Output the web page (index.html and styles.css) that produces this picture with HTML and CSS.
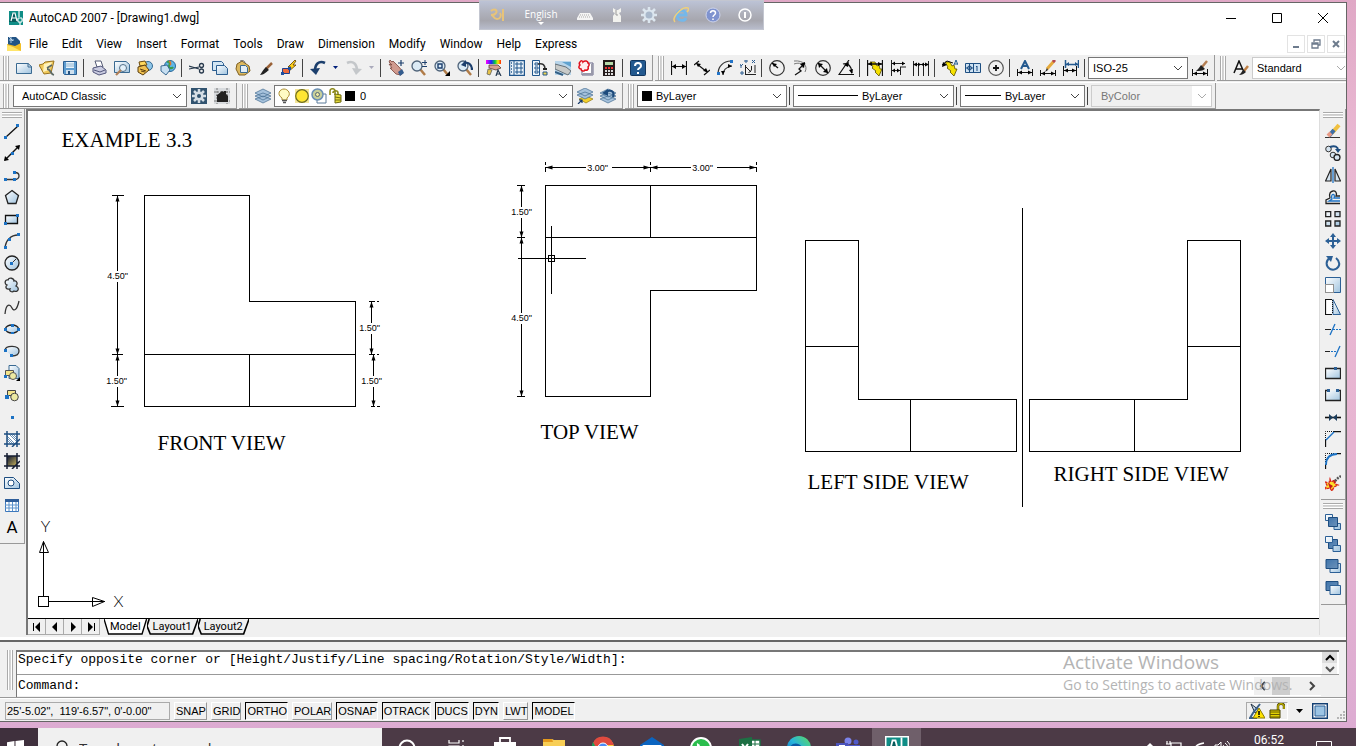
FILE: index.html
```html
<!DOCTYPE html>
<html lang="en">
<head>
<meta charset="utf-8">
<title>AutoCAD 2007 - [Drawing1.dwg]</title>
<link rel="stylesheet" href="styles.css">
</head>
<body>
<svg class="defs" aria-hidden="true">
  <defs>
    <linearGradient id="blue" x1="0" y1="0" x2="1" y2="1"><stop offset="0" stop-color="#fff"/><stop offset="1" stop-color="#9fc3df"/></linearGradient>
    <linearGradient id="deep" x1="0" y1="0" x2="1" y2="1"><stop offset="0" stop-color="#3f74ab"/><stop offset="1" stop-color="#6d93ba"/></linearGradient>
    <linearGradient id="dusk" x1="0" y1="0" x2="1" y2="1"><stop offset="0" stop-color="#0b1430"/><stop offset="1" stop-color="#c9b45c"/></linearGradient>
    <linearGradient id="rainbow"><stop offset="0" stop-color="#f0f"/><stop offset=".35" stop-color="#22f"/><stop offset=".6" stop-color="#0c4"/><stop offset=".8" stop-color="#fe0"/><stop offset="1" stop-color="#f20"/></linearGradient>
    <linearGradient id="edge" x1="0" y1="1" x2="1" y2="0"><stop offset="0" stop-color="#0b5cb0"/><stop offset=".5" stop-color="#27b4de"/><stop offset="1" stop-color="#5fdc5a"/></linearGradient>
  </defs>
  <symbol id="chev" viewBox="0 0 10 10"><path d="M1 3l4 4 4-4" fill="none" stroke="currentColor"/></symbol>
  <symbol id="lens" viewBox="0 0 16 16"><path d="M9 9l5 6" stroke="#b07c48" stroke-width="2.500"/><circle cx="6" cy="6" r="5" fill="#dcebf6" stroke="#50647a" stroke-width="1.300"/></symbol>
  <symbol id="bolt" viewBox="0 0 16 16"><path d="M3 2h5l2 4 2-1 1 4h2l-3 7-4-4 1-1-4-3 1-1z" fill="#f5e000" stroke="#554c00" stroke-width=".8"/></symbol>
  <symbol id="stack" viewBox="0 0 16 16"><path d="M0 11l8-3 8 3-8 4zM0 8l8-3 8 3-8 4zM0 5l8-4 8 4-8 4z" fill="#a6c2dc" stroke="#446b91" stroke-width=".7"/></symbol>
  <symbol id="cad" viewBox="0 0 16 16"><path d="M1 1h14v14H1z" fill="#0f8d86"/><path d="M1 12h9l-3-9H4z" fill="#075b5c"/><path d="M3 11l2-8h2l2 8M4 8h4M11 1v6m-2 3h6M12 9v6" fill="none" stroke="#fff" stroke-width="1.200"/><path d="M10 8h4v4h-4z" fill="#0f8d86" stroke="#fff"/></symbol>
</svg>

<div class="desktop">
<div class="window">
  <header class="titlebar">
    <svg class="i"><use href="#cad"/></svg>
    <h1>AutoCAD 2007 - [Drawing1.dwg]</h1>
    <div class="winbtns">
      <button aria-label="Minimize"><svg class="i" viewBox="0 0 16 16"><path d="M3 8.500h10" stroke="#000"/></svg></button>
      <button aria-label="Maximize"><svg class="i" viewBox="0 0 16 16"><path d="M3.500 3.500h9v9h-9z" fill="none" stroke="#000"/></svg></button>
      <button aria-label="Close"><svg class="i" viewBox="0 0 16 16"><path d="M3 3l10 10M13 3L3 13" stroke="#000"/></svg></button>
    </div>
  </header>

  <nav class="menubar">
    <svg class="i" viewBox="0 0 16 16"><path d="M2 1h8l4 4v10H2z" fill="#225485"/><path d="M1 8l8 2 6-3v8H1z" fill="#f2bf26"/><path d="M1 9l6 2 8 4H1z" fill="#ffe56b"/><path d="M3 4h5M5 1v6M3 1l4 4" stroke="#cfe6f5" stroke-width=".8"/></svg>
    <button>File</button><button>Edit</button><button>View</button><button>Insert</button><button>Format</button><button>Tools</button><button>Draw</button><button>Dimension</button><button>Modify</button><button>Window</button><button>Help</button><button>Express</button>
    <div class="mdibtns">
      <button aria-label="Minimize drawing"><svg viewBox="0 0 12 12"><path d="M3 9h6" stroke="#6d7b8d" stroke-width="2"/></svg></button>
      <button aria-label="Restore drawing"><svg viewBox="0 0 12 12"><path d="M4 4V2h6v5H8M2 5h6v5H2zM2 6h6" fill="none" stroke="#6d7b8d" stroke-width="1.300"/></svg></button>
      <button aria-label="Close drawing"><svg viewBox="0 0 12 12"><path d="M3 3l6 6M9 3L3 9" stroke="#6d7b8d" stroke-width="2"/></svg></button>
    </div>
  </nav>

  <div class="toolrow">
    <div class="toolbar">
      <i class="grip"></i>
      <button aria-label="New"><svg class="i" viewBox="0 0 16 16"><path d="M.5 3.500H12l3.500 3v7H.5z" fill="url(#blue)" stroke="#3a6a92"/><path d="M12 3v4h4" fill="none" stroke="#3a6a92"/></svg></button>
      <button aria-label="Open"><svg class="i" viewBox="0 0 16 16"><path d="M0 5l4-1 2-2 9-1-3 12-7 1z" fill="#f0c95a" stroke="#9a7420"/><path d="M5 4l8-2-3 8-6 2z" fill="#fff3bd"/><path d="M8 8l5-3M8 9c4 0 3 5 7 6" fill="none" stroke="#5d6a66" stroke-width="1.800"/></svg></button>
      <button aria-label="Save"><svg class="i" viewBox="0 0 16 16"><path d="M1.500 1.500h13v13h-12l-1-1z" fill="#5d9cd0" stroke="#2c5e90"/><path d="M4 2h8v6H4z" fill="#e8f3fb"/><path d="M4 4h8M4 6h8" stroke="#8fb4d0"/><path d="M4 10h8v4H4z" fill="#cfe0ee"/><path d="M6 11h2v3H6z" fill="#26517d"/></svg></button>
      <i class="sep"></i>
      <button aria-label="Plot"><svg class="i" viewBox="0 0 16 16"><path d="M4 1h6l2 6H6z" fill="#fff" stroke="#555b75"/><path d="M2 8l8-2 5 4v3l-7 2-6-3z" fill="#c9cbe0" stroke="#51557a"/><path d="M3 10l6 2 5-2" fill="none" stroke="#51557a"/></svg></button>
      <button aria-label="Plot preview"><svg class="i" viewBox="0 0 16 16"><path d="M.5 1.500H12l3.500 3v8H.5z" fill="url(#blue)" stroke="#3a6a92"/><circle cx="9" cy="8" r="3.500" fill="#e4f1fa" stroke="#52708a"/><path d="M7 10l-5 5" stroke="#b08058" stroke-width="2.200"/></svg></button>
      <button aria-label="Publish"><svg class="i" viewBox="0 0 16 16"><circle cx="11" cy="6" r="4.500" fill="#8fc6e8" stroke="#336a92"/><path d="M2 2l6-1 2 4-7 1z" fill="#ffd95c" stroke="#6b4a10"/><path d="M1 7l7-2 4 5-6 5-5-3z" fill="#f0c150" stroke="#5b3f10"/><path d="M3 9l6 2M4 11l4 1" stroke="#5b3f10"/></svg></button>
      <button aria-label="3D DWF"><svg class="i" viewBox="0 0 16 16"><circle cx="10" cy="6" r="5.500" fill="#5fb6e8" stroke="#2c6796"/><path d="M7 2c3-1 3 2 2 4s3 3 4 1" fill="none" stroke="#3a9b4b" stroke-width="2"/><path d="M9 1c2 1 2 3 1 4" fill="none" stroke="#e0752c" stroke-width="1.500"/><path d="M1 6l6-1 3 5-4 5-5-4z" fill="#c7dff2" stroke="#3a6a92"/></svg></button>
      <i class="sep"></i>
      <button aria-label="Cut"><svg class="i" viewBox="0 0 16 16"><path d="M0 6l10 3M0 9l10-2" stroke="#27394c" stroke-width="1.200"/><circle cx="12.500" cy="5.500" r="2" fill="none" stroke="#27394c" stroke-width="1.300"/><circle cx="12.500" cy="11" r="2" fill="none" stroke="#27394c" stroke-width="1.300"/></svg></button>
      <button aria-label="Copy"><svg class="i" viewBox="0 0 16 16"><path d="M.5 1.500h9l2 2v7H.5z" fill="#d4e6f3" stroke="#2c5e90"/><path d="M4.500 5.500h8l3 3v6h-11z" fill="url(#blue)" stroke="#2c5e90"/></svg></button>
      <button aria-label="Paste"><svg class="i" viewBox="0 0 16 16"><path d="M2 4l5-3 7 5 1 5-5 4H4L1 9z" fill="#dcb960" stroke="#806020"/><path d="M5 1c3-1 5 0 5 2" fill="none" stroke="#666"/><path d="M5.500 5.500h5l2 2v5h-7z" fill="#e2eef8" stroke="#3a6a92"/></svg></button>
      <button aria-label="Match properties"><svg class="i" viewBox="0 0 16 16"><path d="M14 3L8 9" stroke="#9a6238" stroke-width="2.500"/><path d="M8 7l3 3c-3 2-5 5-9 5 2-3 3-5 6-8z" fill="#222"/></svg></button>
      <button aria-label="Block editor"><svg class="i" viewBox="0 0 16 16"><path d="M14 0L7 7h3l-3 5 8-7h-3l3-4z" fill="#ffd21c" stroke="#5b3800" stroke-width=".8"/><path d="M1.500 8.500h7v5h-7z" fill="#ec6a3a" stroke="#1d3f8f"/><path d="M0 12h3v3H0zM7 7h3v3H7z" fill="#1d4f9f"/></svg></button>
      <i class="sep"></i>
      <button aria-label="Undo"><svg class="i" viewBox="0 0 16 16"><path d="M15 3C9 0 5 4 5 11" fill="none" stroke="#1c3f6d" stroke-width="2.600"/><path d="M0 9l10-1-4 7z" fill="#1c3f6d"/></svg></button>
      <button class="drop" aria-label="Undo list"><svg viewBox="0 0 6 6"><path d="M0 1h5L2.500 4z" fill="#001f7a"/></svg></button>
      <button aria-label="Redo"><svg class="i" viewBox="0 0 16 16"><path d="M1 3c6-3 10 1 10 8" fill="none" stroke="#c4c7ca" stroke-width="2.600"/><path d="M16 9L6 8l4 7z" fill="#c4c7ca"/></svg></button>
      <button class="drop" aria-label="Redo list"><svg viewBox="0 0 6 6"><path d="M0 1h5L2.500 4z" fill="#aab"/></svg></button>
      <i class="sep"></i>
      <button aria-label="Pan"><svg class="i" viewBox="0 0 16 16"><path d="M1 2l3 3-3-1 3 4-2 0 6 6 5 1 2-3-4-5-6-6-1 1-2-2z" fill="#d09a8e" stroke="#7a433a" stroke-width=".8"/><path d="M10 12l4-3 2 4-4 3z" fill="#335c8e"/><path d="M13 0v6M10 3h6" stroke="#1c3f6d" stroke-width="1.200"/></svg></button>
      <button aria-label="Zoom realtime"><svg class="i" viewBox="0 0 16 16"><use href="#lens"/><path d="M14 0v5M11 2.500h5M11 6.500h5" stroke="#1c3f6d"/></svg></button>
      <button aria-label="Zoom window"><svg class="i" viewBox="0 0 16 16"><use href="#lens"/><path d="M4 4h4v4H4z" fill="none" stroke="#1c3f6d" stroke-width="1.400"/><path d="M16 11v5h-5z"/></svg></button>
      <button aria-label="Zoom previous"><svg class="i" viewBox="0 0 16 16"><use href="#lens"/><path d="M15 10c0-6-4-8-8-7" fill="none" stroke="#1c3f6d" stroke-width="2.200"/><path d="M9 0v7L4 5z" fill="#1c3f6d"/></svg></button>
      <i class="sep"></i>
      <button aria-label="Properties"><svg class="i" viewBox="0 0 16 16"><path d="M0 0h15v4H0z" fill="url(#rainbow)"/><path d="M3 5l9 0 3 3-5 2-7-2z" fill="#d8a090" stroke="#553a35" stroke-width=".8"/><path d="M2 9l4 1-2 5-3-1z" fill="#e5c24a" stroke="#555" stroke-width=".7"/><path d="M10 16l2-6 3 6M11 14h3" fill="none" stroke="#24384f" stroke-width="1.200"/></svg></button>
      <button aria-label="DesignCenter"><svg class="i" viewBox="0 0 16 16"><path d="M.5.5h15v15H.5z" fill="#edf5fb" stroke="#20568c" stroke-width="1.500"/><path d="M5 1v14" stroke="#20568c"/><path d="M2 3h1M2 6h1M2 9h1M2 12h1" stroke="#20568c" stroke-width="1.500"/><path d="M7 3h2v2H7zM11 3h2v2h-2zM7 7h2v2H7zM11 7h2v2h-2zM7 11h2v2H7zM11 11h2v2h-2z" fill="none" stroke="#20568c"/></svg></button>
      <button aria-label="Tool palettes"><svg class="i" viewBox="0 0 16 16"><path d="M.5.5h7v15h-7z" fill="#edf5fb" stroke="#20568c"/><path d="M3 3h3v2H3zM3 7h3v2H3zM3 11h3v2H3z" fill="none" stroke="#20568c"/><path d="M6 4c5-1 7 1 7 5" fill="none" stroke="#333" stroke-width="1.600"/><path d="M11 8h4v2h-4z" fill="#222"/><path d="M11 12h4v3h-4z" fill="#f2d44e" stroke="#20568c"/></svg></button>
      <button aria-label="Sheet set manager"><svg class="i" viewBox="0 0 16 16"><path d="M0 1h16v14H0z" fill="#b8d5ea"/><path d="M7 2l9 0v5z" fill="#5fa2cf"/><path d="M0 4l11 3 5 4-3 4L0 9z" fill="#c8cac8" stroke="#657078"/><path d="M0 12l8 3" stroke="#335f85" stroke-width="2"/></svg></button>
      <button aria-label="Markup"><svg class="i" viewBox="0 0 16 16"><path d="M4 3h11v12H4z" fill="#fff" stroke="#668"/><path d="M5 14h9V4" fill="none" stroke="#99a" stroke-width="2"/><path d="M2 2c1-2 3-1 3 0 2-2 5-1 5 1 2 1 1 3 0 4 1 2-1 4-3 3-1 2-4 1-4-1-2 0-3-2-1-4-1-1-1-2 0-3z" fill="#fdeeee" stroke="#e0101c" stroke-width="1.500"/></svg></button>
      <button aria-label="Calculator"><svg class="i" viewBox="0 0 16 16"><path d="M2 0h12v16H2z" fill="#231a1a"/><path d="M4 2h8v3H4z" fill="#b5d9a8"/><path d="M4 8h8" stroke="#e33" stroke-width="2" stroke-dasharray="2 1"/><path d="M4 11h8M4 14h8" stroke="#ddd" stroke-width="2" stroke-dasharray="2 1"/></svg></button>
      <i class="sep"></i>
      <button aria-label="Help"><svg class="i" viewBox="0 0 16 16"><rect x=".5" y=".5" width="15" height="15" rx="1" fill="#23598f" stroke="#12365e"/><path d="M5 6c0-4 6-4 6 0 0 2-3 2-3 4M8 12v2" fill="none" stroke="#fff" stroke-width="2"/></svg></button>
    </div>

    <div class="toolbar">
      <i class="grip"></i>
      <button aria-label="Linear dimension"><svg class="i" viewBox="0 0 16 16"><path d="M.5 1v14M15.500 1v14M1 6.500h14" stroke="#111" stroke-width="1.200"/><path d="M1 6.500L5 4v5zM15 6.500L11 4v5z"/></svg></button>
      <button aria-label="Aligned dimension"><svg class="i" viewBox="0 0 16 16"><path d="M0 5l5-4M10 15l6-5M3 4l10 8" stroke="#111" stroke-width="1.200"/><path d="M2 3l5 1-3 3zM14 12l-5-1 3-3z"/></svg></button>
      <button aria-label="Arc length"><svg class="i" viewBox="0 0 16 16"><path d="M1 14C1 7 6 1 14 1M6 15c0-5 3-8 9-9" fill="none" stroke="#333" stroke-width="1.200"/><path d="M0 12h3v3H0zM13 0h3v3h-3z" fill="#2374c8"/><path d="M6 15l-2-4h4zM15 6l-4-2v4z"/></svg></button>
      <button aria-label="Ordinate"><svg class="i" viewBox="0 0 16 16"><path d="M5.500 5v10M5 14.500h11M11.500 6v4l-3 3M6 7l5 5M15 5v8" fill="none" stroke="#222"/><path d="M0 4l1 2 2-2M1 6v2M1 12h2v2H1zM5 0h2v2H5zM12 0l3 3M15 0l-3 3" fill="none" stroke="#2b5c91"/></svg></button>
      <i class="sep"></i>
      <button aria-label="Radius"><svg class="i" viewBox="0 0 16 16"><circle cx="8" cy="8" r="7.300" fill="none" stroke="#333" stroke-width="1.200"/><path d="M3 3l6 5" stroke="#111" stroke-width="1.300"/><path d="M3 3l5 1-3 3z"/></svg></button>
      <button aria-label="Jogged"><svg class="i" viewBox="0 0 16 16"><path d="M2 1c10-1 14 5 11 11M2 4c6-2 9 0 9 4" fill="none" stroke="#777"/><path d="M3 15l6-4-2-2 6-6" fill="none" stroke="#111" stroke-width="1.300"/><path d="M13 2l-1 6-4-4z"/></svg></button>
      <button aria-label="Diameter"><svg class="i" viewBox="0 0 16 16"><circle cx="8" cy="8" r="7.300" fill="none" stroke="#333" stroke-width="1.200"/><path d="M3 3l10 10" stroke="#111" stroke-width="1.300"/><path d="M3 3l5 1-4 4zM13 13l-5-1 4-4z"/></svg></button>
      <button aria-label="Angular"><svg class="i" viewBox="0 0 16 16"><path d="M11 0L1 14.500h15M5 4c5-2 9 3 9 9" fill="none" stroke="#111" stroke-width="1.200"/><path d="M6 5l5-3-1 5zM14 14l-3-4 4-1z"/></svg></button>
      <i class="sep"></i>
      <button aria-label="Quick dimension"><svg class="i" viewBox="0 0 16 16"><use href="#bolt"/><path d="M.5 0v16M15.500 0v16M1 4h14" stroke="#111" stroke-width="1.300"/><path d="M1 4l4-2v4zM15 4l-4-2v4z"/></svg></button>
      <button aria-label="Baseline"><svg class="i" viewBox="0 0 16 16"><path d="M1.500 0v16M2 3.500h13M2 10.500h8M10.500 7v8M10 7h6" stroke="#222"/><path d="M2 3.500l3-2v4zM15 3.500l-3-2v4zM2 10.500l3-2v4zM10 10.500l-3-2v4z"/></svg></button>
      <button aria-label="Continue"><svg class="i" viewBox="0 0 16 16"><path d="M.5 1v15M5.500 5v11M10.500 5v11M15.500 1v15M1 4.500h14" stroke="#222"/><path d="M0 4.500l4-2v4zM8 4.500l-3-2v4zM8 4.500l3-2v4zM16 4.500l-4-2v4z"/></svg></button>
      <i class="sep"></i>
      <button aria-label="Quick leader"><svg class="i" viewBox="0 0 16 16"><use href="#bolt"/><path d="M0 5l5-4 6 2" fill="none" stroke="#111"/><path d="M0 7l1-5 4 3z"/><path d="M12 5l2-5 2 5M13 4h2" fill="none" stroke="#23598f"/></svg></button>
      <button aria-label="Tolerance"><svg class="i" viewBox="0 0 16 16"><path d="M.5 3.500h15v9H.5zM8.500 3v10" fill="#cfe2f2" stroke="#1e4f82"/><circle cx="4.500" cy="8" r="2" fill="none" stroke="#1e4f82"/><path d="M4.500 4v8M1 8h7M11 7l1-1v5" fill="none" stroke="#1e4f82"/></svg></button>
      <button aria-label="Center mark"><svg class="i" viewBox="0 0 16 16"><circle cx="8" cy="8" r="7.300" fill="none" stroke="#555" stroke-width="1.200"/><path d="M8 5v6M5 8h6" stroke="#111" stroke-width="1.800"/></svg></button>
      <i class="sep"></i>
      <button aria-label="Dimension edit"><svg class="i" viewBox="0 0 16 16"><path d="M4 9l4-8 4 8M5 6h6" fill="none" stroke="#23598f" stroke-width="2"/><path d="M.5 9v7M15.500 9v7M1 12.500h14" stroke="#111"/><path d="M1 12.500l4-2v4zM15 12.500l-4-2v4z"/></svg></button>
      <button aria-label="Dimension text edit"><svg class="i" viewBox="0 0 16 16"><path d="M14 1L7 9" stroke="#e5a93b" stroke-width="3"/><path d="M13 0l2 2" stroke="#b34550" stroke-width="3"/><path d="M7 8l-2 4 3-2" fill="#222"/><path d="M.5 10v6M15.500 10v6M1 13.500h14" stroke="#111"/><path d="M1 13.500l4-2v4zM15 13.500l-4-2v4z"/></svg></button>
      <button aria-label="Dimension update"><svg class="i" viewBox="0 0 16 16"><path d="M2.500 0v8M15.500 0v8M3 4.500h12" stroke="#23598f" stroke-width="1.500"/><path d="M3 4l3-2v4zM15 4l-3-2v4z" fill="#23598f"/><path d="M.5 6v10M13.500 6v10M1 10.500h12" stroke="#111"/><path d="M1 10.500l4-2v4zM13 10.500l-4-2v4z"/></svg></button>
      <i class="sep"></i>
      <div class="combo dimstyle"><select aria-label="Dimension style"><option>ISO-25</option></select><svg class="chev"><use href="#chev"/></svg></div>
      <button aria-label="Dimension style manager"><svg class="i" viewBox="0 0 16 16"><path d="M15 1l-5 6" stroke="#b58055" stroke-width="2.500"/><path d="M9 5l4 4c-3 2-5 2-9 2 2-2 3-3 5-6z" fill="#222"/><path d="M.5 9v7M15.500 9v7M1 13.500h14" stroke="#111"/><path d="M1 13.500l4-2v4zM15 13.500l-4-2v4z"/></svg></button>
    </div>

    <div class="toolbar last">
      <i class="grip"></i>
      <button aria-label="Text style"><svg class="i" viewBox="0 0 16 16"><path d="M1 13L6 1l4 9M3 9h6" fill="none" stroke="#111" stroke-width="1.500"/><path d="M15 6l-4 5" stroke="#c08045" stroke-width="2.500"/><path d="M10 9l3 3c-2 2-4 3-7 3 2-2 3-3 4-6z" fill="#222"/></svg></button>
      <div class="combo faded"><select aria-label="Text style name"><option>Standard</option></select><svg class="chev"><use href="#chev"/></svg></div>
    </div>
  </div>

  <div class="toolrow second">
    <div class="toolbar">
      <i class="grip"></i>
      <div class="combo workspace"><select aria-label="Workspace"><option>AutoCAD Classic</option></select><svg class="chev"><use href="#chev"/></svg></div>
      <button aria-label="Workspace settings"><svg class="i" viewBox="0 0 16 16"><path d="M0 0h16v16H0z" fill="#31536f"/><path d="M8 1v14M1 8h14M3 3l10 10M13 3L3 13" stroke="#d5dee5" stroke-width="2.500"/><circle cx="8" cy="8" r="4.500" fill="#d5dee5"/><circle cx="8" cy="8" r="2" fill="#31536f"/></svg></button>
      <button aria-label="My workspace"><svg class="i" viewBox="0 0 16 16"><path d="M0 0h16v16H0z" fill="#d8dbde"/><path d="M3 0v16M0 4h16M13 0v16M0 13h16" stroke="#777" stroke-dasharray="2 1"/><path d="M2 8l6-5 2 1V3h2v3l2 2v6H3V8z" fill="#222"/></svg></button>
    </div>
    <div class="toolbar">
      <i class="grip"></i>
      <button aria-label="Layer properties"><svg class="i"><use href="#stack"/></svg></button>
      <div class="combo layer">
        <svg class="i" viewBox="0 0 16 16"><path d="M5 10c-6-4-2-9 2-9s8 5 3 9v2H5z" fill="#fffbc4" stroke="#ab8d33"/><path d="M5 12.500h5M6 14.500h3" stroke="#555" stroke-width="1.300"/></svg>
        <svg class="i" viewBox="0 0 16 16"><path d="M1 1h14v14H1z" fill="#f5e69a"/><circle cx="8" cy="8" r="6.300" fill="#ffe633" stroke="#6b6b20" stroke-width="1.200"/></svg>
        <svg class="i" viewBox="0 0 16 16"><path d="M6 6h9v9H6z" fill="#fff" stroke="#5b7b99"/><circle cx="6.500" cy="6.500" r="5.500" fill="#c6cf9a" stroke="#6a8fb5" stroke-width="1.500"/><circle cx="6.500" cy="6.500" r="2" fill="#eee9a0" stroke="#567"/></svg>
        <svg class="i" viewBox="0 0 16 16"><path d="M2 7V3c0-3 5-3 5 0v4M5 5c0-3 5-3 5 0v3" fill="none" stroke="#8e8a1c" stroke-width="1.600"/><path d="M7 6l6 1v7l-6 1z" fill="#e6dc3c" stroke="#6f6b10"/><path d="M7 9l6 1M7 12l6 0" stroke="#6f6b10"/></svg>
        <i class="swatch"></i>
        <select aria-label="Layer"><option>0</option></select><svg class="chev"><use href="#chev"/></svg>
      </div>
      <button aria-label="Make layer current"><svg class="i" viewBox="0 0 16 16"><path d="M2 11l7-3 7 3-7 4z" fill="#f3cf2c" stroke="#8e7510" stroke-width=".7"/><path d="M0 7l8-3 8 3-8 4zM0 4l8-4 8 4-8 4z" fill="#a6c2dc" stroke="#446b91" stroke-width=".7"/><path d="M1 16l4-4M2 12h3v3" fill="none" stroke="#15396a" stroke-width="1.200"/></svg></button>
      <button aria-label="Layer previous"><svg class="i" viewBox="0 0 16 16"><use href="#stack"/><path d="M13 9c2-6-3-8-7-5" fill="none" stroke="#1c4a7c" stroke-width="2.200"/><path d="M2 5l6-4v7z" fill="#1c4a7c"/></svg></button>
    </div>
    <div class="toolbar">
      <i class="grip"></i>
      <div class="combo color"><i class="swatch"></i><select aria-label="Color"><option>ByLayer</option></select><svg class="chev"><use href="#chev"/></svg></div>
      <i class="sep"></i>
      <div class="combo ltype"><i class="rule long"></i><select aria-label="Linetype"><option>ByLayer</option></select><svg class="chev"><use href="#chev"/></svg></div>
      <i class="sep"></i>
      <div class="combo lweight"><i class="rule"></i><select aria-label="Lineweight"><option>ByLayer</option></select><svg class="chev"><use href="#chev"/></svg></div>
      <i class="sep"></i>
      <div class="combo plotstyle faded"><select aria-label="Plot style" disabled><option>ByColor</option></select><svg class="chev"><use href="#chev"/></svg></div>
    </div>
  </div>

  <main class="work">
    <div class="side left">
      <div class="toolbar vert">
        <i class="grip"></i>
        <button aria-label="Line"><svg class="i" viewBox="0 0 16 16"><path d="M2 14L14 3" stroke="#111" stroke-width="1.300"/><path d="M0 13h3v3H0zM12 1h3v3h-3z" fill="#1c72c4"/></svg></button>
        <button aria-label="Construction line"><svg class="i" viewBox="0 0 16 16"><path d="M1 15L15 1" stroke="#111" stroke-width="1.500"/><path d="M0 16l1-5 4 4zM16 0l-1 5-4-4z"/><path d="M7 7h3v3H7z" fill="#1c72c4"/></svg></button>
        <button aria-label="Polyline"><svg class="i" viewBox="0 0 16 16"><path d="M1 12.500h9c7 0 6-7 1-7" fill="none" stroke="#333" stroke-width="1.300"/><path d="M0 11h3v3H0zM9 11h3v3H9zM9 4h3v3H9z" fill="#1c72c4"/></svg></button>
        <button aria-label="Polygon"><svg class="i" viewBox="0 0 16 16"><path d="M8 1.500l6.500 5-2.500 8H4l-2.500-8z" fill="url(#blue)" stroke="#222" stroke-width="1.300"/></svg></button>
        <button aria-label="Rectangle"><svg class="i" viewBox="0 0 16 16"><path d="M1.500 4.500h12v8h-12z" fill="url(#blue)" stroke="#111" stroke-width="1.300"/><path d="M0 11h3v3H0zM12 3h3v3h-3z" fill="#1c72c4"/></svg></button>
        <button aria-label="Arc"><svg class="i" viewBox="0 0 16 16"><path d="M1 14C2 7 7 2 14 2" fill="none" stroke="#333" stroke-width="1.300"/><path d="M0 13h3v3H0zM4 5h3v3H4zM13 0h3v3h-3z" fill="#1c72c4"/></svg></button>
        <button aria-label="Circle"><svg class="i" viewBox="0 0 16 16"><circle cx="8" cy="8" r="7" fill="url(#blue)" stroke="#222" stroke-width="1.300"/><path d="M8 8l4-4" stroke="#333"/><path d="M6 7h3v3H6z" fill="#1c72c4"/></svg></button>
        <button aria-label="Revision cloud"><svg class="i" viewBox="0 0 16 16"><path d="M3 8C0 7 1 2 4 3c1-3 6-2 6 1 3-1 4 3 2 5 4 2 2 7-2 5-2 2-5 0-4-2-4 1-5-2-3-4z" fill="url(#blue)" stroke="#333" stroke-width="1.300"/></svg></button>
        <button aria-label="Spline"><svg class="i" viewBox="0 0 16 16"><path d="M1 15C2 4 6 5 8 9s5 2 7-7" fill="none" stroke="#333" stroke-width="1.300"/></svg></button>
        <button aria-label="Ellipse"><svg class="i" viewBox="0 0 16 16"><ellipse cx="8" cy="8" rx="6.500" ry="4" fill="url(#blue)" stroke="#222" stroke-width="1.300"/><path d="M0 7h3v3H0zM7 3h3v3H7zM13 7h3v3h-3zM7 11h3v2H7z" fill="#1c72c4"/></svg></button>
        <button aria-label="Ellipse arc"><svg class="i" viewBox="0 0 16 16"><path d="M1 7c1-5 14-5 14 1 0 4-4 5-7 5" fill="url(#blue)" stroke="#333" stroke-width="1.300"/><path d="M0 6h3v3H0zM6 11h3v3H6z" fill="#1c72c4"/></svg></button>
        <button aria-label="Insert block"><svg class="i" viewBox="0 0 16 16"><path d="M5 .5h7l3 3v10H5z" fill="url(#blue)" stroke="#3a6a92"/><path d="M1.500 5.500h8v5h-8z" fill="#f4e58a" stroke="#555"/><circle cx="9" cy="11" r="3.500" fill="#ece9a2" stroke="#555"/><path d="M0 10h3v3H0z" fill="#1c72c4"/><path d="M16 12v4h-4z"/></svg></button>
        <button aria-label="Make block"><svg class="i" viewBox="0 0 16 16"><path d="M3.500 3.500h8v5h-8z" fill="#f4e58a" stroke="#444"/><circle cx="10.500" cy="10" r="3.800" fill="#ece9a2" stroke="#444"/><path d="M1 8h4v4H1z" fill="#1c72c4"/></svg></button>
        <button aria-label="Point"><svg class="i" viewBox="0 0 16 16"><path d="M7 7h3v3H7z" fill="#1c72c4"/></svg></button>
        <button aria-label="Hatch"><svg class="i" viewBox="0 0 16 16"><path d="M3 3h10v10H3z" fill="#fff"/><path d="M3 5l8 8M3 9l4 4M5 3l8 8M9 3l4 4M3 7l6 6M7 3l6 6" stroke="#6b91b5"/><path d="M3 0v16M13 0v16M0 3h16M0 13h16M8 16l8-8" stroke="#1d4d80" stroke-width="1.500"/></svg></button>
        <button aria-label="Gradient"><svg class="i" viewBox="0 0 16 16"><path d="M3 3h10v10H3z" fill="url(#dusk)"/><path d="M3 0v16M13 0v16M0 3h16M0 13h16M8 16l8-8" stroke="#151d30" stroke-width="1.500"/></svg></button>
        <button aria-label="Region"><svg class="i" viewBox="0 0 16 16"><path d="M.5 2.500h9l6 6v5H.5z" fill="url(#blue)" stroke="#1d4d80"/><circle cx="7" cy="8" r="3" fill="#fff" stroke="#1d4d80"/></svg></button>
        <button aria-label="Table"><svg class="i" viewBox="0 0 16 16"><path d="M1.500 2.500h13v12h-13z" fill="#fff" stroke="#3c78bd"/><path d="M1 2h14v3H1z" fill="#2e5e9a"/><path d="M5 5v9M8.500 5v9M12 5v9M1 8h14M1 11h14" stroke="#5c93cc"/></svg></button>
        <button class="mtext" aria-label="Multiline text">A</button>
      </div>
    </div>

    <section class="drawing">
      <div class="canvas">
        <svg class="model" width="1290" height="507" viewBox="27.500 110.500 1290 507" role="img" aria-label="Orthographic views">
          <g class="ln">
            <path d="M144 195H249V301H355V406H144zM144 354H355M249 354V406"/>
            <path d="M545 185H756V290H650V396H545zM545 237H756M650 185V237"/>
            <path d="M805 240H858V399H1016V451H805zM805 346H858M910 399V451"/>
            <path d="M1187 240H1240V451H1029V399H1187zM1187 346H1240M1134 399V451M1022 207V506"/>
            <path d="M117 195V270M117 281V354M117 354V375M117 386V406M111 195H123M111 354H122M110 406H123"/>
            <path d="M371 301V322M371 333V354M373 354V375M373 386V406M368 301H374M376 301H378M368 354H374M376 354H378M370 406H374M376 406H379"/>
            <path d="M545 167H585M611 167H690M716 167H756M545 161V164M545 166V171M650 161V164M650 166V171M756 161V164M756 166V171"/>
            <path d="M521 185V206M521 217V237M521 237V312M521 323V396M516 185H524M516 237H524M516 396H524"/>
            <path d="M517 258H585M551 225V293M548 255H554V261H548z"/>
            <path d="M38 596H48V606H38zM43 596V541M48 601H104"/>
          </g>
          <path class="arrow" d="M117 195l-2 6h4zM117 354l-2-6h4zM117 354l-2 6h4zM117 406l-2-6h4zM371 301l-2 6h4zM371 354l-2-6h4zM373 354l-2 6h4zM373 406l-2-6h4zM521 185l-2 6h4zM521 237l-2-6h4zM521 237l-2 6h4zM521 396l-2-6h4zM545 167l7-2v4zM650 167l-7-2v4zM650 167l7-2v4zM756 167l-7-2v4z"/>
          <path class="ucs" d="M43 541l-4 11h9zM43 541v11M104 601l-12-4v9zM104 601H92"/>
          <g class="label">
            <text x="61" y="146">EXAMPLE 3.3</text>
            <text x="157" y="449">FRONT VIEW</text>
            <text x="540" y="438">TOP VIEW</text>
            <text x="807" y="488">LEFT SIDE VIEW</text>
            <text x="1053" y="480">RIGHT SIDE VIEW</text>
          </g>
          <g class="dim">
            <text x="117" y="278">4.50"</text><text x="116" y="383">1.50"</text>
            <text x="369" y="330">1.50"</text><text x="371" y="383">1.50"</text>
            <text x="597" y="170">3.00"</text><text x="702" y="170">3.00"</text>
            <text x="521" y="214">1.50"</text><text x="521" y="320">4.50"</text>
          </g>
          <g class="axis"><text x="45" y="531">Y</text><text x="118" y="606">X</text></g>
        </svg>
      </div>
      <div class="tabs">
        <button class="nav" aria-label="First layout"><svg viewBox="0 0 10 10"><path d="M1 1h1v8H1zM8 0v10L3 5z"/></svg></button>
        <button class="nav" aria-label="Previous layout"><svg viewBox="0 0 10 10"><path d="M7 0v10L2 5z"/></svg></button>
        <button class="nav" aria-label="Next layout"><svg viewBox="0 0 10 10"><path d="M3 0v10l5-5z"/></svg></button>
        <button class="nav" aria-label="Last layout"><svg viewBox="0 0 10 10"><path d="M8 1h1v8H8zM2 0v10l5-5z"/></svg></button>
        <button class="tab active"><svg viewBox="0 0 47 16" preserveAspectRatio="none"><path d="M0 0l5 15h37l5-15" fill="#fff" stroke="#000" stroke-width="1.500"/></svg><span>Model</span></button>
        <button class="tab"><svg viewBox="0 0 47 16" preserveAspectRatio="none"><path d="M2 0l-2 7 3 8h39l5-15" fill="#f0f0f0" stroke="#000" stroke-width="1.500"/></svg><span>Layout1</span></button>
        <button class="tab"><svg viewBox="0 0 47 16" preserveAspectRatio="none"><path d="M2 0l-2 7 3 8h39l5-15" fill="#f0f0f0" stroke="#000" stroke-width="1.500"/></svg><span>Layout2</span></button>
      </div>
    </section>

    <div class="side right">
      <div class="toolbar vert">
        <i class="grip"></i>
        <button aria-label="Erase"><svg class="i" viewBox="0 0 16 16"><path d="M0 14.500h15" stroke="#333"/><path d="M14 2L7 10" stroke="#f0c040" stroke-width="4"/><path d="M9 7l-5 6" stroke="#3c6ea8" stroke-width="4"/><path d="M6 10l-3 3" stroke="#e79a86" stroke-width="4"/></svg></button>
        <button aria-label="Copy object"><svg class="i" viewBox="0 0 16 16"><circle cx="3.500" cy="4" r="2.800" fill="#d5e3ef" stroke="#333"/><circle cx="8" cy="10" r="2.800" fill="#d5e3ef" stroke="#333"/><circle cx="12" cy="12.500" r="3" fill="#d5e3ef" stroke="#222" stroke-width="1.300"/><path d="M5 2c5-2 8 0 8 3" fill="none" stroke="#1d4d80" stroke-width="2"/><path d="M10 4h6l-3 4z" fill="#1d4d80"/></svg></button>
        <button aria-label="Mirror"><svg class="i" viewBox="0 0 16 16"><path d="M6 2v12H.5zM10 2v12h5.500z" fill="#d5e3ef" stroke="#222" stroke-width="1.200"/><path d="M8 0v16" stroke="#1c72c4" stroke-width="1.300"/></svg></button>
        <button aria-label="Offset"><svg class="i" viewBox="0 0 16 16"><path d="M15 14.500H1V11l4-2c-3-9 9-9 6-2h4" fill="none" stroke="#222" stroke-width="1.300"/><path d="M15 12H4l3-2c-2-6 4-6 2-1h6" fill="none" stroke="#1c72c4" stroke-width="1.300"/></svg></button>
        <button aria-label="Array"><svg class="i" viewBox="0 0 16 16"><path d="M.7.7h5v5h-5zM10 .7h5v5h-5zM.7 10h5v5h-5zM10 10h5v5h-5z" fill="url(#blue)" stroke="#222" stroke-width="1.300"/></svg></button>
        <button aria-label="Move"><svg class="i" viewBox="0 0 16 16"><path d="M8 2v12M2 8h12" stroke="#2c6096" stroke-width="2"/><path d="M8 0l3 4H5zM8 16l3-4H5zM0 8l4-3v6zM16 8l-4-3v6z" fill="#2c6096"/></svg></button>
        <button aria-label="Rotate"><svg class="i" viewBox="0 0 16 16"><path d="M5 3C1 5 0 11 5 14c7 3 13-5 6-11" fill="none" stroke="#2c6096" stroke-width="2"/><path d="M1 1l7 0-2 6z" fill="#2c6096"/></svg></button>
        <button aria-label="Scale"><svg class="i" viewBox="0 0 16 16"><path d="M.5.5h15v15H.5z" fill="url(#blue)" stroke="#2c6096"/><path d="M0 7h9v9H0z" fill="#fff"/><path d="M.5 7.500h8v8h-8z" fill="none" stroke="#222" stroke-dasharray="1 1"/></svg></button>
        <button aria-label="Stretch"><svg class="i" viewBox="0 0 16 16"><path d="M8 .5l7.500 15H8z" fill="url(#blue)" stroke="#2c6096"/><path d="M7 .500H.5v15H7" fill="#fff" stroke="#111" stroke-width="1.200"/><path d="M7.500 1v14" stroke="#111" stroke-dasharray="1 1"/></svg></button>
        <button aria-label="Trim"><svg class="i" viewBox="0 0 16 16"><path d="M0 8.500h6" stroke="#222"/><path d="M8 8.500h8" stroke="#1c72c4" stroke-dasharray="2 1"/><path d="M5 14l5-11" stroke="#1c72c4" stroke-width="1.300"/></svg></button>
        <button aria-label="Extend"><svg class="i" viewBox="0 0 16 16"><path d="M0 8.500h5" stroke="#222"/><path d="M6 8.500h6" stroke="#1c72c4" stroke-dasharray="2 1"/><path d="M10 14l5-11" stroke="#1c72c4" stroke-width="1.300"/></svg></button>
        <button aria-label="Break at point"><svg class="i" viewBox="0 0 16 16"><path d="M.5 3.500h15v10H.5z" fill="url(#blue)" stroke="#222" stroke-width="1.300"/><path d="M9 2h3v3H9z" fill="#2c6096"/></svg></button>
        <button aria-label="Break"><svg class="i" viewBox="0 0 16 16"><path d="M2 3.500H.5v10h15v-10H14" fill="url(#blue)" stroke="#222" stroke-width="1.300"/><path d="M2 2h3v3H2zM11 2h3v3h-3z" fill="#2c6096"/></svg></button>
        <button aria-label="Join"><svg class="i" viewBox="0 0 16 16"><path d="M0 8.500h16" stroke="#111" stroke-width="1.600"/><path d="M4 5l4 3.500L4 12zM12 5L8 8.500l4 3.500z" fill="#1b3d5c"/></svg></button>
        <button aria-label="Chamfer"><svg class="i" viewBox="0 0 16 16"><path d="M.5 16V9M9 .5h7" stroke="#111" stroke-width="1.300"/><path d="M.5 9V.5H9" fill="none" stroke="#111" stroke-dasharray="1 1"/><path d="M1 9l8-8" stroke="#1c72c4" stroke-width="1.500"/></svg></button>
        <button aria-label="Fillet"><svg class="i" viewBox="0 0 16 16"><path d="M.5 16v-5M11 .5h5" stroke="#111" stroke-width="1.300"/><path d="M.5 9V.5H9" fill="none" stroke="#111" stroke-dasharray="1 1"/><path d="M1 12C1 5 5 1 12 1" fill="none" stroke="#1c72c4" stroke-width="1.800"/></svg></button>
        <button aria-label="Explode"><svg class="i" viewBox="0 0 16 16"><path d="M5 4l1 3 4-2 0 4 3 1-4 2-2 4-2-3-5 1 2-4-2-3 4 1z" fill="#ffdf29" stroke="#d9251c" stroke-width="1.300" stroke-dasharray="3 1"/><path d="M3 8l5 3-3 3zM8 5l3 2-2 2z" fill="#c4161c"/><path d="M10 6l3-3 3-2" fill="none" stroke="#555" stroke-width="2.500" stroke-dasharray="2 1"/></svg></button>
      </div>
      <div class="toolbar vert">
        <i class="grip"></i>
        <button aria-label="Bring to front"><svg class="i" viewBox="0 0 16 16"><path d="M.5.5h7v6h-7zM9 9.500h6.500v6H9z" fill="url(#blue)" stroke="#2c6096"/><path d="M3.500 3.500h9v9h-9z" fill="url(#deep)" stroke="#1d4d80"/></svg></button>
        <button aria-label="Send to back"><svg class="i" viewBox="0 0 16 16"><path d="M3.500 3.500h9v9h-9z" fill="url(#deep)" stroke="#1d4d80"/><path d="M.5.5h7v6h-7zM8 9.500h7.500v6H8z" fill="url(#blue)" stroke="#2c6096"/></svg></button>
        <button aria-label="Bring above objects"><svg class="i" viewBox="0 0 16 16"><path d="M5 5.500h10.500v9H5z" fill="url(#blue)" stroke="#2c6096"/><path d="M1 1.500h12v9H1z" fill="url(#deep)" stroke="#1d4d80"/></svg></button>
        <button aria-label="Send under objects"><svg class="i" viewBox="0 0 16 16"><path d="M1 1.500h12v9H1z" fill="url(#deep)" stroke="#1d4d80"/><path d="M5 5.500h10.500v9H5z" fill="url(#blue)" stroke="#2c6096"/></svg></button>
      </div>
    </div>
  </main>

  <section class="command">
    <i class="grip"></i>
    <div class="console">
      <div class="history">
        <output>Specify opposite corner or [Height/Justify/Line spacing/Rotation/Style/Width]:</output>
        <div class="vscroll">
          <button aria-label="Scroll up"><svg viewBox="0 0 10 8"><path d="M1 6l4-4 4 4" fill="none" stroke="#000" stroke-width="2"/></svg></button>
          <button aria-label="Scroll down"><svg viewBox="0 0 10 8"><path d="M1 2l4 4 4-4" fill="none" stroke="#555" stroke-width="2"/></svg></button>
        </div>
      </div>
      <div class="entry">
        <label for="cmd">Command:</label><input id="cmd" type="text">
        <div class="hscroll">
          <button aria-label="Scroll left"><svg viewBox="0 0 8 10"><path d="M6 1L2 5l4 4" fill="none" stroke="#444" stroke-width="2"/></svg></button><i class="thumb"></i><button aria-label="Scroll right"><svg viewBox="0 0 8 10"><path d="M2 1l4 4-4 4" fill="none" stroke="#444" stroke-width="2"/></svg></button>
        </div>
      </div>
    </div>
  </section>

  <footer class="status">
    <span class="coords">25'-5.02",&nbsp; 119'-6.57", 0'-0.00"</span>
    <button>SNAP</button><button>GRID</button><button class="on">ORTHO</button><button>POLAR</button><button class="on">OSNAP</button><button class="on">OTRACK</button><button class="on">DUCS</button><button class="on">DYN</button><button>LWT</button><button class="on">MODEL</button>
    <div class="tray">
      <div class="traybox">
        <svg class="i" viewBox="0 0 16 16"><path d="M2 1l8 6-4 3z" fill="#c5d6e6" stroke="#234"/><path d="M11 1l-7 9-3 5h7" fill="none" stroke="#3a5f88" stroke-width="2"/><path d="M10 5l6 10H4z" fill="#ffe400" stroke="#8c7a00"/><path d="M10 8v4M10 13v1" stroke="#000" stroke-width="1.500"/></svg>
        <svg class="i" viewBox="0 0 16 16"><path d="M9 8V3c0-3 6-3 6 0v3" fill="none" stroke="#554d00" stroke-width="2.500"/><path d="M9 8V3c0-3 6-3 6 0v3" fill="none" stroke="#e8d800"/><path d="M1 7h10v8H1z" fill="#e3d200" stroke="#443e00"/><path d="M1 9h10M1 11.500h10M1 14h10" stroke="#665d00"/></svg>
      </div>
      <button class="menu" aria-label="Status bar menu"><svg viewBox="0 0 8 8"><path d="M0 2h7L3.500 6z"/></svg></button>
      <button aria-label="Clean screen"><svg class="i" viewBox="0 0 16 16"><path d="M.7.7h14.600v14.600H.7z" fill="#fff" stroke="#123f73" stroke-width="1.400"/><path d="M3 3h10v10H3z" fill="#9cc4e4" stroke="#2c6096"/></svg></button>
      <svg class="size" viewBox="0 0 10 10"><path d="M7 1h2v2H7zM4 4h2v2H4zM7 4h2v2H7zM1 7h2v2H1zM4 7h2v2H4zM7 7h2v2H7z" fill="#b5b5b5"/></svg>
    </div>
  </footer>
</div>

<div class="taskbar">
  <div class="taskinner">
    <button class="start" aria-label="Start"><svg viewBox="0 0 16 16"><path d="M0 2l7-1v6.500H0zM8 1l8-1v7.500H8zM0 8.500h7V15l-7-1zM8 8.500h8V16l-8-1z" fill="#fff"/></svg></button>
    <label class="search"><svg viewBox="0 0 16 16"><circle cx="9" cy="6" r="5" fill="none" stroke="#222" stroke-width="1.300"/><path d="M5 10l-4 5" stroke="#222"/></svg><input type="text" placeholder="Type here to search"></label>
    <div class="apps">
      <button aria-label="Cortana"><svg viewBox="0 0 24 24"><circle cx="12" cy="12" r="7.500" fill="none" stroke="#fff" stroke-width="2"/></svg></button>
      <button aria-label="Task view"><svg viewBox="0 0 24 24"><path d="M5 4v3h10V4M5 20v-3h10v3M5 10h10v4H5zM19 4v2M19 9v11" fill="none" stroke="#fff" stroke-width="1.200"/></svg></button>
      <button aria-label="Store"><svg viewBox="0 0 24 24"><path d="M1 6h22v16H1z" fill="#fff"/><path d="M7 6V2h10v4" fill="none" stroke="#fff" stroke-width="1.800"/></svg></button>
      <button aria-label="File Explorer"><svg viewBox="0 0 24 24"><path d="M1 3h9l2 1h11v18H1z" fill="#f8ce55"/><path d="M1 3h9l1 3H1z" fill="#e59a1c"/></svg></button>
      <button aria-label="Chrome"><svg viewBox="0 0 24 24"><circle cx="12" cy="12" r="11" fill="#ffcd40"/><path d="M2 7a11 11 0 0 1 20 0l1 2H12l-4 7z" fill="#e04a3f"/><path d="M2 6l6 11 2 6C1 21-1 12 2 6z" fill="#159f5c"/><circle cx="12" cy="12" r="5" fill="#4c8bf5" stroke="#fff"/></svg></button>
      <button aria-label="Mail"><svg viewBox="0 0 24 24"><path d="M0 9l12-8 12 8v13H0z" fill="#0b64c0"/><path d="M2 9h20l-10 7z" fill="#fff"/></svg></button>
      <button aria-label="WhatsApp"><svg viewBox="0 0 24 24"><circle cx="12" cy="12" r="10" fill="#2bbd4d" stroke="#fff" stroke-width="2"/><path d="M8 7c-1 5 4 10 9 9l-3-3-2 1-2-3 1-2z" fill="#fff"/></svg></button>
      <button aria-label="Excel"><svg viewBox="0 0 24 24"><path d="M12 4h10v16H12z" fill="#fff" stroke="#1d7044" stroke-width="1.500"/><path d="M13 8h8M13 12h8M17 4v16" stroke="#1d7044"/><path d="M1 3l13-2v22L1 20z" fill="#1d7044"/><path d="M4 8l6 8M10 8l-6 8" stroke="#fff" stroke-width="2"/></svg></button>
      <button aria-label="Edge"><svg viewBox="0 0 24 24"><circle cx="12" cy="12" r="12" fill="url(#edge)"/><path d="M2 13c2-7 10-7 13-2-5-2-9 3-5 10-5-1-9-4-8-8z" fill="#0c59a4"/></svg></button>
      <button aria-label="Teams"><svg viewBox="0 0 24 24"><circle cx="12" cy="5" r="3.500" fill="#7b83eb"/><circle cx="20" cy="6" r="2.500" fill="#5059c9"/><path d="M7 9h17v11H7z" fill="#5059c9"/><path d="M0 7h12v12H0z" fill="#4b53bc"/><path d="M3 10h6M6 10v6" stroke="#fff" stroke-width="2"/></svg></button>
      <button class="running" aria-label="AutoCAD"><svg viewBox="0 0 16 16"><path d="M0 0h16v16H0z" fill="#fff"/><use href="#cad"/></svg></button>
    </div>
    <div class="systray">
      <svg viewBox="0 0 16 16"><path d="M3 9l5-5 5 5" fill="none" stroke="#fff" stroke-width="1.500"/></svg>
      <svg viewBox="0 0 16 16"><path d="M5 3h10v8H5zM0 4h5M1 1v3M4 1v3" fill="none" stroke="#fff" stroke-width="1.200"/></svg>
      <svg viewBox="0 0 16 16"><path d="M3 14C3 7 7 4 14 3M7 14c0-4 3-6 7-7" fill="none" stroke="#fff" stroke-width="1.300"/></svg>
      <svg viewBox="0 0 16 16"><path d="M1 5h3l3-3v12l-3-3H1zM9 5c2 2 2 4 0 6M11 3c4 3 4 7 0 10M13 1c5 5 5 9 0 14" fill="none" stroke="#fff"/></svg>
      <time>06:52</time>
      <svg viewBox="0 0 16 16"><path d="M.5 1.500h15v11H9l-3 3v-3H.5z" fill="none" stroke="#fff"/></svg>
    </div>
  </div>
</div>

<div class="langbar">
  <svg class="i" viewBox="0 0 16 16"><path d="M2 4c3-3 7-1 5 2-1 2-4 2-5 2 3 0 2 4 6 4 3 0 5-3 3-6M14 2v12" fill="none" stroke="#e7c37a" stroke-width="2"/></svg>
  <button class="lang">English<svg viewBox="0 0 6 4"><path d="M0 0h6L3 3z" fill="#fff"/></svg></button>
  <svg class="i" viewBox="0 0 16 16"><path d="M3 6h10l3 5v2H0v-2z" fill="#f4f4f4"/><path d="M3 8h10M2 10h12" stroke="#aaa" stroke-dasharray="1 1"/></svg>
  <svg class="i" viewBox="0 0 16 16"><path d="M4 1l3 2h2l3-2v4l-2 1 2 3v6H4V9l2-3-2-1z" fill="#f2f2ee"/><path d="M7 3v5h2" fill="none" stroke="#999"/></svg>
  <svg class="i" viewBox="0 0 16 16"><path d="M8 0v16M0 8h16M2 2l12 12M14 2L2 14" stroke="#dce6ef" stroke-width="2.500"/><circle cx="8" cy="8" r="4.500" fill="#a9b8cb" stroke="#dce6ef" stroke-width="2"/></svg>
  <svg class="i" viewBox="0 0 16 16"><path d="M13 11c-2 4-9 3-9-3s9-6 9 0H5" fill="none" stroke="#74b8ea" stroke-width="2.800"/><path d="M2 15C-2 11 9-1 15 1c1 1 0 3-1 4" fill="none" stroke="#edcf7c" stroke-width="1.500"/></svg>
  <svg class="i" viewBox="0 0 16 16"><circle cx="8" cy="8" r="7" fill="#7f93cf" stroke="#cdd3ea"/><path d="M5.500 6c0-3 5-3 5 0 0 2-2.500 2-2.500 4M8 11.500v1.500" fill="none" stroke="#fff" stroke-width="1.500"/></svg>
  <svg class="i" viewBox="0 0 16 16"><circle cx="8" cy="8" r="6" fill="none" stroke="#fff" stroke-width="1.500"/><path d="M8 5v6" stroke="#fff" stroke-width="2"/></svg>
</div>

<div class="watermark"><p>Activate Windows</p><p class="sub">Go to Settings to activate Windows.</p></div>
</div>
</body>
</html>
```
FILE: styles.css
```css
* { box-sizing: border-box; }

body {
  margin: 0;
  font: 12px/16px Roboto, "Open Sans", sans-serif;
  color: #000;
}

button {
  border: 0;
  padding: 0;
  background: none;
  font: inherit;
  color: inherit;
  display: flex;
  align-items: center;
  justify-content: center;
}

svg { flex: none; display: block; }
.i { width: 16px; height: 16px; }
.defs { position: absolute; width: 0; height: 0; }

.desktop {
  position: relative;
  height: 100vh;
  display: flex;
  flex-direction: column;
  padding-top: 2px;
  background: linear-gradient(#e0a8c6, #eab9d3 20%, #e7b5d2 60%, #dcabd2);
  overflow: hidden;
}

.window {
  flex: 1;
  min-height: 0;
  margin: 0 9px 6px 0;
  display: flex;
  flex-direction: column;
  background: #f0f0f0;
  border: 1px solid #666;
  border-left: 0;
  overflow: hidden;
}

/* Title and menu */
.titlebar {
  flex: none;
  height: 30px;
  display: flex;
  align-items: center;
  background: #fff;
  padding-left: 8px;
  gap: 5px;
}
.titlebar h1 { margin: 0; font-size: 12px; font-weight: 400; }
.winbtns { margin-left: auto; display: flex; }
.winbtns button { width: 46px; height: 29px; }

.menubar {
  flex: none;
  height: 21px;
  display: flex;
  align-items: center;
  background: #fff;
  padding: 0 1px 0 6px;
}
.menubar > button { padding: 0 7px; }
.mdibtns { margin-left: auto; display: flex; gap: 2px; }
.mdibtns button { width: 18px; height: 18px; border: 1px solid #e3e3e3; }
.mdibtns svg { width: 12px; height: 12px; }

/* Horizontal toolbars */
.toolrow { flex: none; height: 28px; display: flex; gap: 2px; border-top: 1px solid #fff; }
.toolrow.second { height: 27px; }
.toolbar {
  flex: none;
  display: flex;
  align-items: center;
  height: 26px;
  padding: 0 3px;
  border-right: 1px solid #999;
  border-bottom: 1px solid #999;
}
.toolbar > button { width: 23px; height: 23px; }
.toolbar > .drop { width: 13px; }
.drop svg { width: 6px; height: 6px; }
.toolbar.last { flex: 1; min-width: 0; padding-right: 0; border-right: 0; }
.grip {
  flex: none;
  width: 6px;
  height: 24px;
  margin-right: 3px;
  border: solid #aaa;
  border-width: 0 1px;
  background: linear-gradient(90deg, #fff 1px, #f0f0f0 1px, #aaa 2px, #fff 3px);
}
.sep { flex: none; width: 1px; height: 18px; margin: 0 3px 0 2px; background: #444; }

.combo {
  flex: none;
  display: flex;
  align-items: center;
  height: 22px;
  padding: 0 4px;
  gap: 4px;
  background: #fff;
  border: 1px solid #777;
}
.combo select {
  flex: 1;
  min-width: 0;
  appearance: none;
  border: 0;
  padding: 0;
  background: none;
  font: 11px/16px "Liberation Sans", sans-serif;
  color: #000;
  opacity: 1;
}
.chev { width: 10px; height: 10px; color: #444; }
.swatch { width: 10px; height: 10px; background: #000; }
.rule { width: 36px; height: 1px; background: #000; }
.rule.long { width: 60px; }
.dimstyle { width: 100px; }
.workspace { width: 174px; padding-left: 8px; margin-left: 1px; }
.layer { width: 299px; gap: 1px; padding-left: 2px; }
.layer select { padding-left: 4px; }
.color { width: 150px; }
.ltype { width: 161px; }
.lweight { width: 125px; }
.plotstyle { width: 121px; }
.combo.faded { border-color: #ccc; }
.faded .chev { color: #aaa; }
.last .combo { flex: 1; min-width: 0; border-right: 0; padding-right: 0; }
.plotstyle.combo { background: linear-gradient(90deg, #f0f0f0 100px, #fff 100px); padding-left: 9px; }
.plotstyle select { color: #777; }

/* Drawing area */
.work { flex: 1; min-height: 0; display: flex; }
.side { flex: none; width: 26px; }
.side.right { width: 26px; padding-left: 1px; }
.toolbar.vert {
  flex-direction: column;
  width: 25px;
  height: auto;
  padding: 3px 0 5px;
}
.vert > button { height: 22px; }
.vert .grip {
  width: 20px;
  height: 6px;
  margin: 0 0 2px;
  border-width: 1px 0;
  background: linear-gradient(#fff 1px, #f0f0f0 1px, #aaa 2px, #fff 3px);
}
.toolbar > .mtext { font: 17px/20px Roboto, sans-serif; }
.drawing {
  flex: 1;
  min-width: 0;
  display: flex;
  flex-direction: column;
  border: solid #777;
  border-width: 2px 0 0 2px;
  border-right: 1px solid #ddd;
}
.canvas { flex: 1; min-height: 0; background: #fff; overflow: hidden; border-bottom: 1px solid #000; }
.ln { fill: none; stroke: #000; shape-rendering: crispEdges; }
.arrow { fill: #000; }
.ucs { fill: #fff; stroke: #000; }
.label { font: 21px "Liberation Serif", serif; }
.dim { font: 9px "Liberation Sans", sans-serif; text-anchor: middle; }
.axis { font: 300 16px Lato, sans-serif; text-anchor: middle; }

.tabs { flex: none; height: 16px; display: flex; font-size: 11px; }
.nav { width: 18px; border-right: 1px solid #aaa; border-bottom: 1px solid #aaa; }
.nav svg { width: 10px; height: 10px; }
.tab { position: relative; padding: 0 6px; height: 16px; }
.tab.active { margin-left: 4px; }
.tab svg { position: absolute; inset: 0; width: 100%; height: 100%; }
.tab span { position: relative; }

/* Command line */
.command {
  flex: none;
  height: 58px;
  display: flex;
  margin-top: 5px;
  padding: 8px 7px 0;
  border-top: 2px solid #666;
  border-bottom: 1px solid #999;
  font: 13px/16px "Liberation Mono", monospace;
  box-shadow: 0 -3px #fff;
}
.command .grip { height: 40px; }
.console { flex: 1; min-width: 0; border: solid #777; border-width: 2px 0 0 1px; }
.history { display: flex; height: 23px; background: #fff; border-bottom: 1px solid #999; padding-left: 1px; }
.history output { flex: 1; }
.vscroll { width: 15px; height: 22px; margin-right: 2px; background: #f0f0f0; display: flex; flex-direction: column; }
.vscroll button { flex: 1; }
.vscroll button:first-child { background: #ddd; }
.vscroll svg { width: 10px; height: 8px; }
.entry { display: flex; height: 21px; background: #fff; padding-left: 1px; align-items: center; margin-right: 18px; }
.entry input { flex: 1; min-width: 0; border: 0; background: none; font: inherit; outline: 0; }
.hscroll { display: flex; width: 67px; height: 18px; background: #f0f0f0; }
.hscroll button { width: 18px; }
.hscroll svg { width: 8px; height: 10px; }
.thumb { width: 18px; background: #cdcdcd; margin-right: auto; }

/* Status bar */
.status {
  flex: none;
  height: 23px;
  display: flex;
  align-items: center;
  gap: 4px;
  padding: 1px 0 0 5px;
  font: 11px/16px "Liberation Sans", sans-serif;
  border-top: 1px solid #fff;
}
.coords { width: 165px; height: 18px; padding-left: 1px; border: 1px solid #aaa; }
.status > button { height: 18px; border: 1px solid #fff; border-right-color: #999; border-bottom-color: #999; padding-left: 1px; }
.status > .on { border-color: #000 #fff #fff #000; }
.tray { margin-left: auto; display: flex; align-items: center; gap: 8px; }
.traybox { display: flex; gap: 4px; padding: 0 2px; border: 1px solid #fff; border-top-color: #aaa; border-left-color: #aaa; }
.menu svg { width: 8px; height: 8px; }
.size { width: 10px; height: 10px; align-self: flex-end; }

/* Taskbar */
.taskbar { flex: none; height: 18px; overflow: hidden; background: #4c3a46; color: #fff; }
.taskinner { height: 40px; display: flex; align-items: center; }
.start { width: 38px; height: 40px; background: #3f303d; padding-right: 8px; }
.start svg { width: 17px; height: 17px; }
.search { width: 344px; height: 40px; display: flex; align-items: center; gap: 8px; padding-left: 15px; background: #f0f0f0; }
.search svg { width: 16px; height: 16px; }
.search input { flex: 1; min-width: 0; border: 0; background: none; font: 15px/20px "Open Sans", sans-serif; }
.search input::placeholder { color: #333; opacity: 1; }
.apps { display: flex; }
.apps button { width: 49px; height: 40px; }
.apps svg { width: 24px; height: 24px; }
.apps .running { background: #6f5f6a; }
.systray { margin-left: auto; display: flex; align-items: center; gap: 8px; padding-right: 24px; }
.systray svg { width: 16px; height: 16px; }
.systray time { align-self: flex-start; padding: 0 24px 16px 16px; line-height: 20px; }

/* Overlays */
.langbar {
  position: absolute;
  left: 479px;
  top: 0;
  width: 285px;
  height: 30px;
  display: flex;
  align-items: center;
  gap: 16px;
  padding-left: 9px;
  background: linear-gradient(#bcc3d6, #aeb0ba 45%, #a6a6ae 70%, #b8bccb);
  border: 1px solid #c3c6d0;
}
.lang { flex-direction: column; width: 40px; padding-top: 4px; color: #fff; font: 10px/12px "Open Sans", sans-serif; gap: 2px; }
.lang svg { width: 6px; height: 4px; }
.watermark {
  position: absolute;
  left: 1063px;
  top: 650px;
  color: #b4b4b4;
  font: 19px/24px "Open Sans", sans-serif;
  pointer-events: none;
}
.watermark p { margin: 0; white-space: nowrap; }
.watermark .sub { font-size: 14px; line-height: 22px; }
```
